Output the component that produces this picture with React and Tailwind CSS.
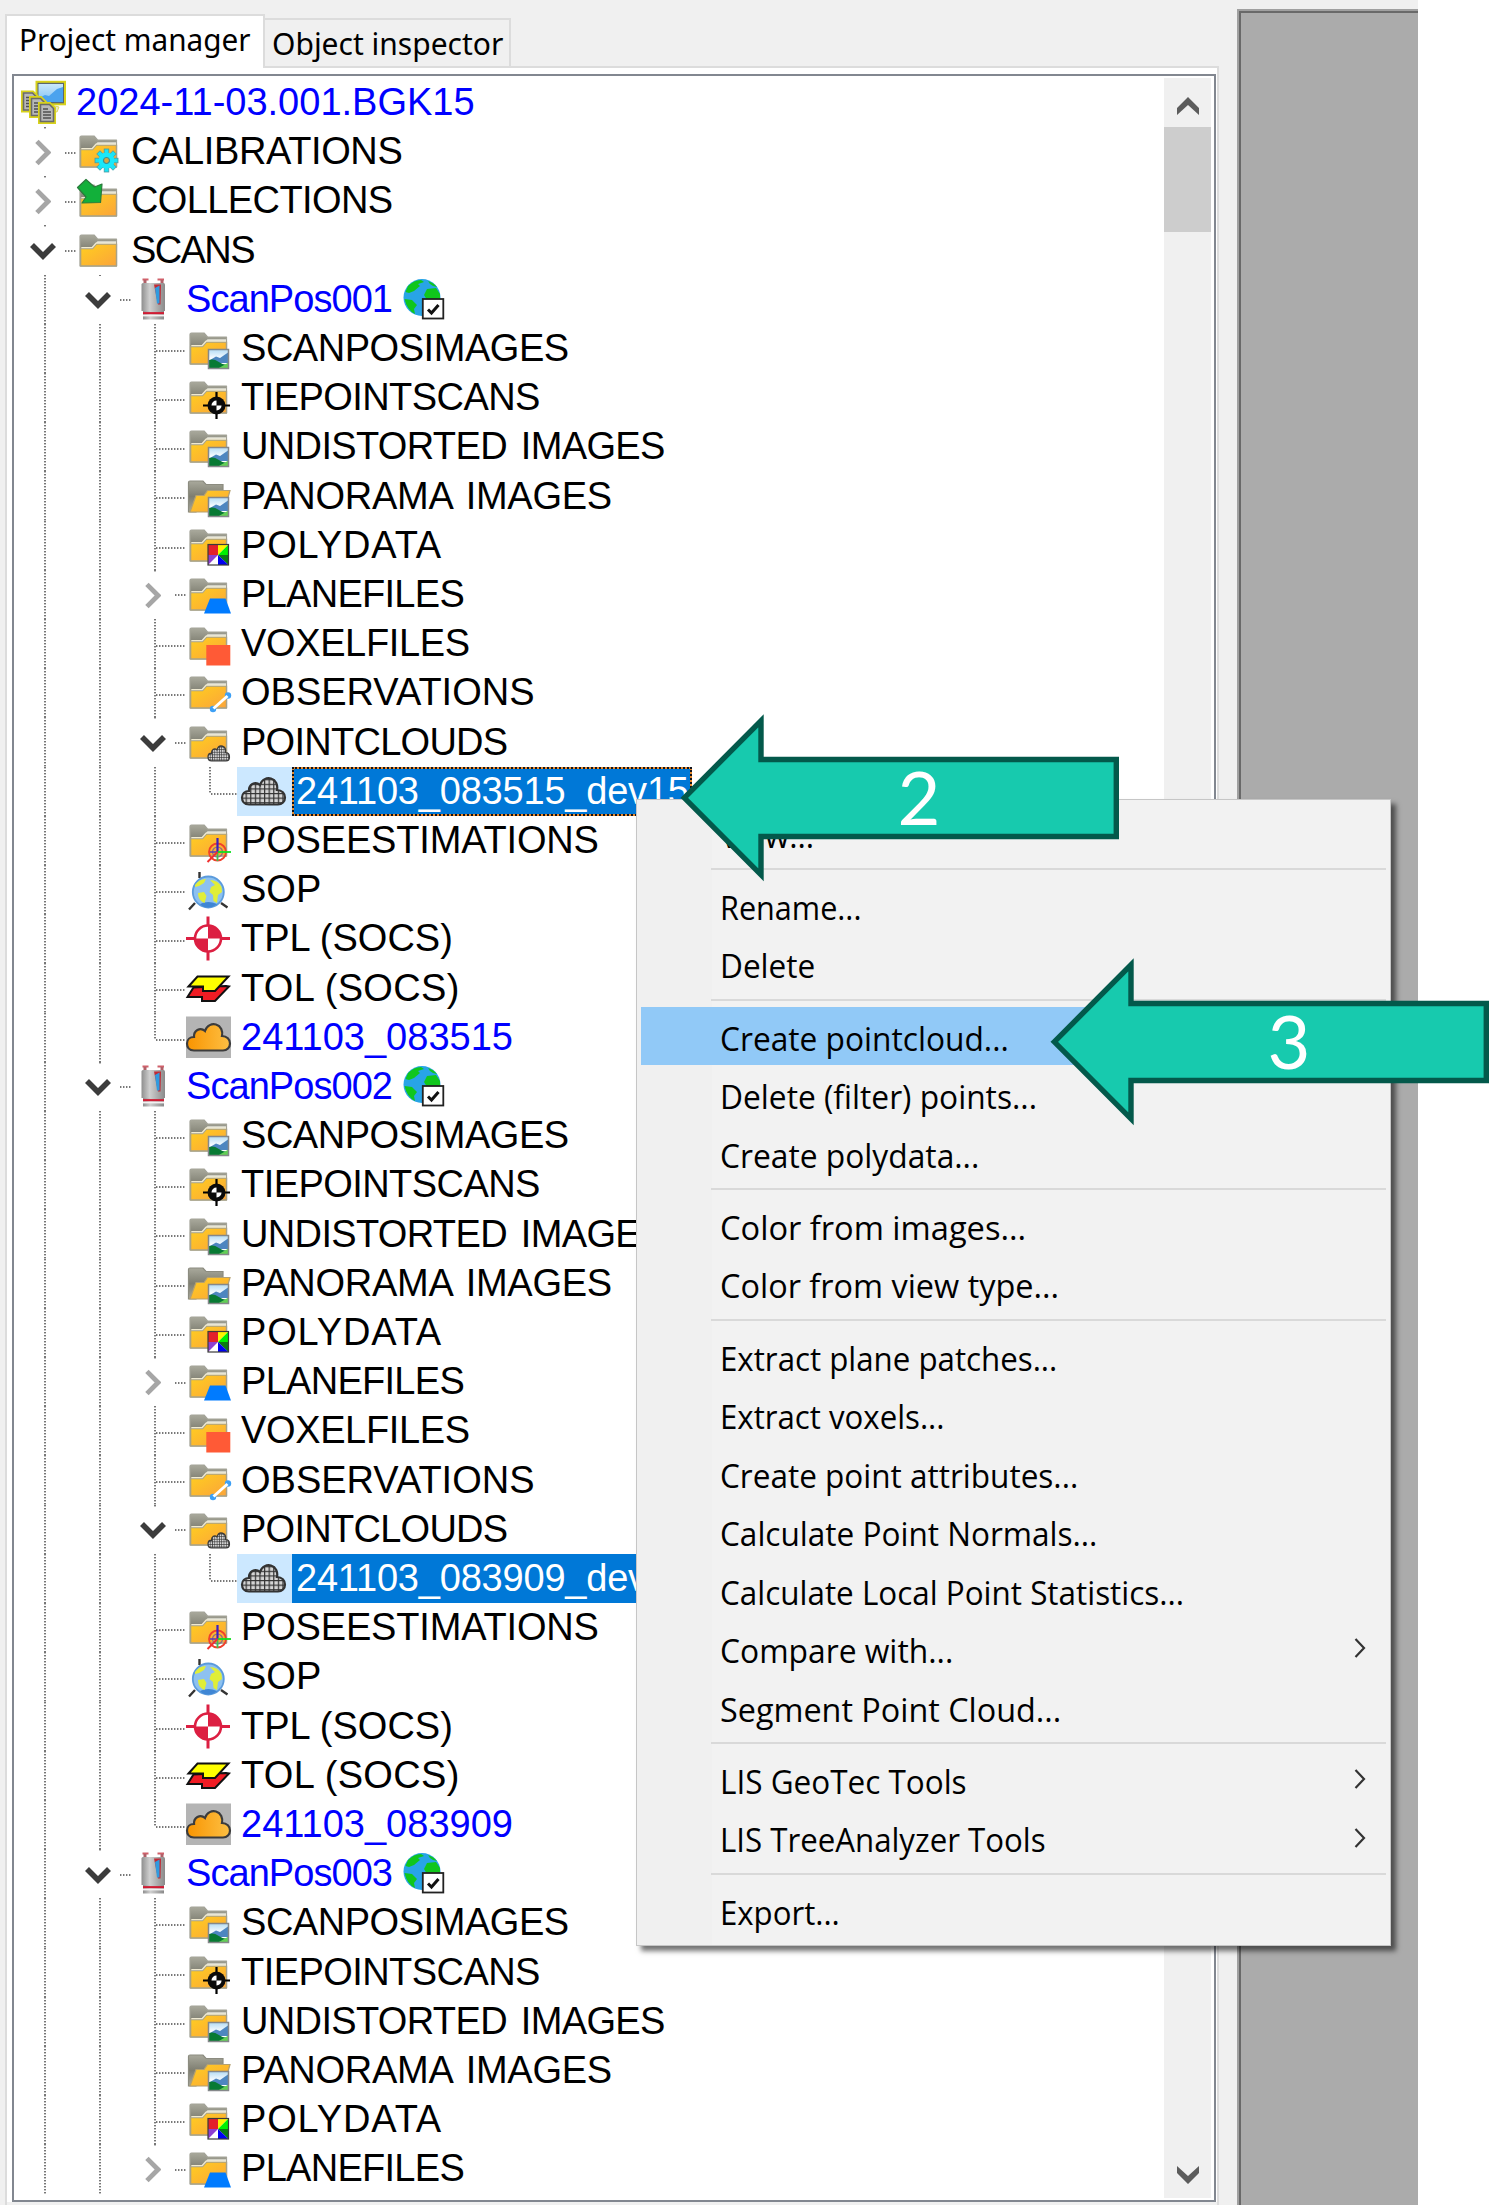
const V_DOTS =
  "bg-[repeating-linear-gradient(to_bottom,#777_0_1px,#c4c4c4_1px_2px,#fff_2px_3px)]";
const H_DOTS =
  "bg-[repeating-linear-gradient(to_right,#777_0_1px,#c4c4c4_1px_2px,#fff_2px_3px)]";

/* ---------- icons (45 x 43 cells) ---------- */

function Defs() {
  return (
    <svg width="0" height="0" className="absolute">
      <defs>
        <linearGradient id="gold" x1="0" y1="0" x2="1" y2="1">
          <stop offset="0" stopColor="#ffcf1f" />
          <stop offset="1" stopColor="#fba43a" />
        </linearGradient>
        <linearGradient id="back" x1="0" y1="0" x2="0" y2="1">
          <stop offset="0" stopColor="#a9a99c" />
          <stop offset="0.5" stopColor="#7d7d70" />
          <stop offset="1" stopColor="#a9a99c" />
        </linearGradient>
        <linearGradient id="sky" x1="0" y1="0" x2="0" y2="1">
          <stop offset="0" stopColor="#b4dcf5" />
          <stop offset="0.5" stopColor="#ffffff" />
        </linearGradient>
        <linearGradient id="orange" x1="0" y1="0" x2="1" y2="0">
          <stop offset="0" stopColor="#f99400" />
          <stop offset="1" stopColor="#fdc044" />
        </linearGradient>
        <linearGradient id="metal" x1="0" y1="0" x2="1" y2="0">
          <stop offset="0" stopColor="#8f8f8f" />
          <stop offset="0.35" stopColor="#cfcfcf" />
          <stop offset="1" stopColor="#8a8a8a" />
        </linearGradient>
        <linearGradient id="screen" x1="0" y1="0" x2="0" y2="1">
          <stop offset="0" stopColor="#c9e8fb" />
          <stop offset="1" stopColor="#7fc0f2" />
        </linearGradient>
        <pattern id="mesh" width="4.6" height="4.6" patternUnits="userSpaceOnUse">
          <rect width="4.6" height="4.6" fill="#d4d4d4" />
          <path d="M0 0H4.6M0 0V4.6" stroke="#333" strokeWidth="2.4" />
        </pattern>
      </defs>
    </svg>
  );
}

function Cell({ children }) {
  return (
    <svg viewBox="0 0 45 43" className="h-[43px] w-[45px] shrink-0 overflow-visible">
      {children}
    </svg>
  );
}

function FolderShape() {
  return (
    <g strokeLinejoin="round">
      <path d="M4 37V7.5Q4 6 5.500 6H18L21.500 10H40.500V37Z" fill="url(#back)" stroke="#a3a398" strokeWidth="1.200" />
      <path d="M21.500 12.300H40V14.500H19.500Z" fill="#e3e3d8" />
      <path d="M4.600 37V19.500H16.500L20.500 15H40.500V37Z" fill="url(#gold)" stroke="#a8a288" strokeWidth="1.400" />
      <path d="M5.300 18.700H16L20 14.200H40" fill="none" stroke="#efe9cf" strokeWidth="1.300" />
    </g>
  );
}

function Landscape() {
  return (
    <g>
      <rect x="22.500" y="22.500" width="20" height="19" fill="url(#sky)" />
      <path d="M24 33L30 29.500L34 31L42 25.500V36H24Z" fill="#4d86c0" />
      <path d="M23 33Q28 31.500 32 34.500T42.500 38V41.500H23Z" fill="#077a33" />
      <path d="M32 41.500L42.500 35.500V41.500Z" fill="#62cf55" />
      <rect x="22.500" y="22.500" width="20" height="19" fill="none" stroke="#85888a" strokeWidth="1.500" />
    </g>
  );
}

const CLOUD =
  "M8 34.500C3 34.500 1 31 1 27.500C1 23.500 4 21 8 21C7.500 15 14 10.500 19 15C21 9 26 7.500 30 8.500C35 10 37 15 36 20C41 20 44 23.500 44 27.500C44 31.500 41 34.500 37 34.500Z";

function NodeIcon({ kind }) {
  switch (kind) {
    case "project":
      return (
        <Cell>
          <rect x="15.500" y="0.800" width="28.500" height="22.500" fill="#5a6670" stroke="#d8d21c" strokeWidth="2" />
          <rect x="17.500" y="3" width="24.500" height="18" fill="url(#screen)" />
          <path d="M17.500 17L24 14L28 15L36 8L42 6V21H17.500Z" fill="#4ba3ee" />
          <path d="M30 24L38 26L36 31L30 30Z" fill="#e8e8c8" stroke="#ddd860" strokeWidth="1" />
          {[[1, 10.5], [9, 16], [18, 22]].map(([x, y]) => (
            <g key={x} transform={"translate(" + x + " " + y + ")"}>
              <path d="M0 0H11L16 5V20H0Z" fill="#c9c9c9" stroke="#d8d21c" strokeWidth="2" />
              <path d="M1.500 1.500H10.500L14.500 5.500V18.500H1.500Z" fill="#b9b9b9" stroke="#6a6a6a" strokeWidth="1.600" />
              <path d="M4 9H12M4 12H12M4 15H12M4 6H9" stroke="#505050" strokeWidth="1.500" />
            </g>
          ))}
        </Cell>
      );
    case "calibrations":
      return (
        <Cell>
          <FolderShape />
          <g transform="translate(30.500 30.500)">
            {[0, 45, 90, 135].map((a) => (
              <rect key={a} x="-2.300" y="-11.500" width="4.600" height="23" fill="#19e3f5" stroke="#4a9aa0" strokeWidth="0.800" transform={"rotate(" + a + ")"} />
            ))}
            <circle r="8" fill="#19e8fa" />
            <circle r="3" fill="#d9a640" stroke="#3a8f98" strokeWidth="1.200" />
          </g>
        </Cell>
      );
    case "collections":
      return (
        <Cell>
          <FolderShape />
          <path d="M1.500 8.500L10 0.500L18.500 8L26 5L24.500 23.500L6 24L10 18Z" fill="#12b03a" stroke="#2a7a3c" strokeWidth="1.200" strokeLinejoin="round" />
        </Cell>
      );
    case "folder":
      return <Cell><FolderShape /></Cell>;
    case "scanner":
      return (
        <Cell>
          <path d="M11.500 1.500H17.500M26.500 1.500H33" stroke="#d0606a" strokeWidth="2.200" />
          <path d="M14 2V6M31 2V6" stroke="#b06068" strokeWidth="3" />
          <path d="M10.500 6.500Q10.500 5 12 5H32.500Q34 5 34 6.500V33H10.500Z" fill="url(#metal)" />
          <path d="M23 6.500H30L29.500 26.500H27Z" fill="#c22a35" />
          <path d="M24 10L28.500 7.500V25.500H26Z" fill="#2f9be0" />
          <path d="M12 33H33V41.500H12Z" fill="url(#metal)" />
          <path d="M12 35.200H33" stroke="#d01c34" strokeWidth="2.200" />
          <path d="M12 37.500H33" stroke="#f2f2f2" strokeWidth="1.800" />
        </Cell>
      );
    case "images":
      return <Cell><FolderShape /><Landscape /></Cell>;
    case "panorama":
      return (
        <Cell>
          <path d="M2.500 37V7.500Q2.500 6 4 6H17L20 9.500H37V20L10 37Z" fill="url(#back)" stroke="#8c8c80" strokeWidth="1.200" />
          <path d="M4 37L10 20.500H18L21.500 15.500H44L38 37Z" fill="url(#gold)" stroke="#b4a070" strokeWidth="1.200" />
          <Landscape />
        </Cell>
      );
    case "tiepoints":
      return (
        <Cell>
          <FolderShape />
          <path d="M30.500 16V43M17 29.500H44" stroke="#000" strokeWidth="2.200" />
          <circle cx="30.500" cy="29.500" r="9" fill="#0a0a0a" />
          <path d="M30.500 29.500H25.500A5 5 0 0 1 30.500 24.500Z" fill="#fff" />
          <path d="M30.500 29.500H35.500A5 5 0 0 1 30.500 34.500Z" fill="#fff" />
        </Cell>
      );
    case "polydata":
      return (
        <Cell>
          <FolderShape />
          <rect x="22" y="20.500" width="20.500" height="20.500" fill="#fff" />
          <path d="M22 20.500H32V31H22Z" fill="#e3202a" />
          <path d="M32 20.500H42.500L32 31Z" fill="#fff200" />
          <path d="M42.500 20.500V31H32Z" fill="#00f000" />
          <path d="M42.500 31V41L32 31Z" fill="#0b7a12" />
          <path d="M32 31L42.500 41H32Z" fill="#0000f0" />
          <path d="M22 31H32L22 41Z" fill="#8d3fd0" />
          <rect x="22" y="20.500" width="20.500" height="20.500" fill="none" stroke="#3a3a3a" strokeWidth="1.200" />
        </Cell>
      );
    case "planes":
      return <Cell><FolderShape /><path d="M24 25.500H39.500L45 40.500H18Z" fill="#007bff" /></Cell>;
    case "voxels":
      return <Cell><FolderShape /><rect x="20.300" y="23" width="24" height="20.500" fill="#ff5a36" /></Cell>;
    case "observations":
      return (
        <Cell>
          <FolderShape />
          <circle cx="27" cy="38" r="3.200" fill="#3da0f5" />
          <circle cx="42" cy="24.500" r="3.200" fill="#3da0f5" />
          <path d="M27.500 37.500L41.500 25" stroke="#fff" strokeWidth="3" />
        </Cell>
      );
    case "pointclouds":
      return (
        <Cell>
          <FolderShape />
          <g transform="translate(21.500 20.500) scale(0.500 0.560)">
            <path d={CLOUD} fill="url(#mesh)" stroke="#3a3a3a" strokeWidth="2.400" />
          </g>
        </Cell>
      );
    case "pose":
      return (
        <Cell>
          <FolderShape />
          <circle cx="31.500" cy="33" r="8.500" fill="none" stroke="#f0402c" strokeWidth="1.800" />
          <circle cx="31.500" cy="33" r="5" fill="none" stroke="#8a6a8a" strokeWidth="1.200" />
          <path d="M31.500 19V33" stroke="#3a20c0" strokeWidth="2.200" />
          <path d="M31.500 33V42" stroke="#40c050" strokeWidth="1.800" />
          <path d="M24 33H32" stroke="#5a40b0" strokeWidth="1.600" />
          <path d="M32 33H45" stroke="#10e020" strokeWidth="1.800" />
          <path d="M31.500 33L21.500 43" stroke="#f03030" strokeWidth="2" />
        </Cell>
      );
    case "sop":
      return (
        <Cell>
          <path d="M13.500 10V4M9 35L3 41.500M35 35L41.500 39.500" stroke="#333" strokeWidth="2.400" />
          <circle cx="22.300" cy="24" r="15.500" fill="#8dc1f0" stroke="#5b9bdc" strokeWidth="1.800" />
          <path d="M14 36Q22 32 31 36Q27 39.500 22 39.500T14 36Z" fill="#3f86d4" />
          <path d="M9 17Q13 11 20 11L18 15L13 18L9 19Z" fill="#e0ee38" />
          <path d="M12 25L18 24L20.500 28L18.500 35Q14 33 12.500 29Z" fill="#e0ee38" />
          <path d="M24 12Q32 12 35.500 19L36 24L32 27L31 35L27.500 33L27 27L23.500 24L25 19L29 17Z" fill="#e0ee38" />
        </Cell>
      );
    case "tpl":
      return (
        <Cell>
          <path d="M22 -0.500V43.500M0 21.500H44" stroke="#dc1f42" strokeWidth="3" />
          <circle cx="22" cy="21.500" r="13" fill="#fff" stroke="#dc1f42" strokeWidth="2.600" />
          <path d="M22 21.500V8.500A13 13 0 0 1 35 21.500Z" fill="#dc1f42" />
          <path d="M22 21.500V34.500A13 13 0 0 1 9 21.500Z" fill="#dc1f42" />
        </Cell>
      );
    case "tol":
      return (
        <Cell>
          <path d="M1.500 30L7.500 20.500L40 19L43 19.500L29 34H16V30Z" fill="#f01c24" stroke="#111" strokeWidth="2" />
          <path d="M2.500 19.500L11.500 9.500H42.500L29 24H17V19.500Z" fill="#ffff00" stroke="#111" strokeWidth="2" />
        </Cell>
      );
    case "scan":
      return (
        <Cell>
          <rect x="0" y="0.500" width="45" height="41.500" fill="#b4b4b4" />
          <path d={CLOUD} fill="url(#orange)" stroke="#3c3c3c" strokeWidth="2.200" />
        </Cell>
      );
    case "cloud":
      return <Cell><path d={CLOUD} fill="url(#mesh)" stroke="#333" strokeWidth="2.200" /></Cell>;
    default:
      return null;
  }
}

function GlobeCheck() {
  return (
    <svg viewBox="0 0 42 42" className="h-[42px] w-[42px] shrink-0 overflow-visible">
      <circle cx="19" cy="19.500" r="18.500" fill="#28a4e6" />
      <path d="M5 8Q11 2 18 2L21 4L15 6L17 8L11 13L6 15L2.500 14Z" fill="#10c61c" />
      <path d="M1.500 21L9 22L14 27L11 31L12 36Q4 32 1.500 21Z" fill="#10c61c" />
      <path d="M25 3Q31 5 34 9L30 8L27 6Z" fill="#10c61c" />
      <path d="M24 11L33 10L37 16V22H24L21 17Z" fill="#10c61c" />
      <rect x="19.800" y="21" width="20.500" height="19.500" fill="#fff" stroke="#222" strokeWidth="1.800" />
      <path d="M25 31.500L28.500 35L35.500 27" fill="none" stroke="#111" strokeWidth="3" />
    </svg>
  );
}

/* ---------- tree ---------- */

const children = (name) => [
  { kind: "images", label: "SCANPOSIMAGES", tracking: "tracking-[-0.46px]" },
  { kind: "tiepoints", label: "TIEPOINTSCANS", tracking: "tracking-[-0.56px]" },
  { kind: "images", label: "UNDISTORTED IMAGES", tracking: "tracking-[-0.65px] [word-spacing:4px]" },
  { kind: "panorama", label: "PANORAMA IMAGES", tracking: "tracking-[-0.27px] [word-spacing:4px]" },
  { kind: "polydata", label: "POLYDATA", tracking: "tracking-[0.85px]" },
  { kind: "planes", label: "PLANEFILES", state: "closed", tracking: "tracking-[-0.72px]" },
  { kind: "voxels", label: "VOXELFILES", tracking: "tracking-[-0.37px]" },
  { kind: "observations", label: "OBSERVATIONS" },
  { kind: "pointclouds", label: "POINTCLOUDS", state: "open", tracking: "tracking-[-0.73px]" },
  { kind: "cloud", label: name + "_dev15", level: 4, last: true, selected: true, focused: name === "241103_083515" },
  { kind: "pose", label: "POSEESTIMATIONS", tracking: "tracking-[-0.17px]" },
  { kind: "sop", label: "SOP" },
  { kind: "tpl", label: "TPL (SOCS)" },
  { kind: "tol", label: "TOL (SOCS)", tracking: "tracking-[0.33px]" },
  { kind: "scan", label: name, blue: true, last: true },
].map((n) => ({ level: 3, ...n }));

const scanPos = (label) => ({
  level: 2, kind: "scanner", label, state: "open", blue: true, globe: true, tracking: "tracking-[-0.95px]",
});

const ROWS = [
  { level: 0, kind: "project", label: "2024-11-03.001.BGK15", blue: true },
  { level: 1, kind: "calibrations", label: "CALIBRATIONS", state: "closed", tracking: "tracking-[-0.38px]" },
  { level: 1, kind: "collections", label: "COLLECTIONS", state: "closed", tracking: "tracking-[-0.6px]" },
  { level: 1, kind: "folder", label: "SCANS", state: "open", tracking: "tracking-[-1.6px]" },
  scanPos("ScanPos001"),
  ...children("241103_083515"),
  scanPos("ScanPos002"),
  ...children("241103_083909"),
  scanPos("ScanPos003"),
  ...children("").slice(0, 6),
];

function Branch({ node }) {
  if (node.state) {
    return (
      <div className="flex h-full w-[59px] shrink-0 flex-col">
        <div className={"ml-[27px] h-[2px] w-[2px] " + V_DOTS} />
        <div className="flex h-[51px] items-center">
          {node.state === "open" ? (
            <svg viewBox="0 0 26 18" className="ml-[13px] h-[18px] w-[26px]">
              <path d="M2 3L13 14L24 3" fill="none" stroke="#3c3c3c" strokeWidth="5.600" />
            </svg>
          ) : (
            <svg viewBox="0 0 17 27" className="mr-[5px] ml-[18px] h-[27px] w-[17px]">
              <path d="M2 2L13.500 13.500L2 25" fill="none" stroke="#a6a6a6" strokeWidth="5" />
            </svg>
          )}
          <div className={"ml-[9px] h-[2px] w-[11px] " + H_DOTS} />
        </div>
      </div>
    );
  }
  return (
    <div className="flex h-full w-[59px] shrink-0 items-start pl-[27px]">
      <div className={(node.last ? "h-[27.500px] " : "h-full ") + "w-[2px] " + V_DOTS} />
      <div className={"mt-[26px] h-[2px] grow " + H_DOTS} />
    </div>
  );
}

function Row({ node }) {
  const guides = Array.from({ length: Math.max(0, node.level - 1) });
  return (
    <div className="flex h-[49.210px] shrink-0 items-center whitespace-nowrap">
      {guides.map((_, i) => (
        <div key={i} className="h-full w-[55px] shrink-0 pl-[27px]">
          <div className={"h-full w-[2px] " + V_DOTS} />
        </div>
      ))}
      {node.level === 0 ? <div className="w-1" /> : <Branch node={node} />}
      {node.selected ? (
        <>
          <div className="-ml-1 flex h-full w-[55px] items-center bg-[#cce8ff] pl-1">
            <NodeIcon kind={node.kind} />
          </div>
          <div
            className={
              "flex h-full items-center bg-[#0078d7] pr-[3px] pb-[1px] pl-[4px] tracking-[-0.2px] text-white " +
              (node.focused
                ? "shadow-[inset_0_0_0_2px_#e88a2c] outline-[2px] -outline-offset-2 outline-dotted outline-[#10131c]"
                : "")
            }
          >
            {node.label}
          </div>
        </>
      ) : (
        <>
          <NodeIcon kind={node.kind} />
          <span className={"ml-[10px] pb-[1px] " + (node.blue ? "text-[#0000ff] " : "text-black ") + (node.tracking || "")}>
            {node.label}
          </span>
        </>
      )}
      {node.globe && (
        <div className="ml-[11px] pb-[1px]">
          <GlobeCheck />
        </div>
      )}
    </div>
  );
}

function ScrollArrow({ down }) {
  return (
    <svg viewBox="0 0 22 18" className="h-[18px] w-[22px]">
      <path d={down ? "M0 0V7L11 18L22 7V0L11 10Z" : "M0 18V11L11 0L22 11V18L11 8Z"} fill="#5c5c5c" />
    </svg>
  );
}

/* ---------- context menu ---------- */

const MENU = [
  [["View...", "scale-x-[0.96]"]],
  [
    ["Rename...", "scale-x-[0.927]"],
    ["Delete", "scale-x-[0.956]"],
  ],
  [
    ["Create pointcloud...", "scale-x-[0.96]"],
    ["Delete (filter) points...", "scale-x-[0.961]"],
    ["Create polydata...", "scale-x-[0.962]"],
  ],
  [
    ["Color from images...", "scale-x-[0.988]"],
    ["Color from view type...", "scale-x-[0.983]"],
  ],
  [
    ["Extract plane patches...", "scale-x-[0.947]"],
    ["Extract voxels...", "scale-x-[0.945]"],
    ["Create point attributes...", "scale-x-[0.955]"],
    ["Calculate Point Normals...", "scale-x-[0.956]"],
    ["Calculate Local Point Statistics...", "scale-x-[0.952]"],
    ["Compare with...", "scale-x-[0.963]", true],
    ["Segment Point Cloud...", "scale-x-[0.98]"],
  ],
  [
    ["LIS GeoTec Tools", "scale-x-[0.954]", true],
    ["LIS TreeAnalyzer Tools", "scale-x-[0.946]", true],
  ],
  [["Export...", "scale-x-[0.944]"]],
];

function ContextMenu() {
  return (
    <div className="absolute top-[799px] left-[636px] h-[1147px] w-[755px] border-[1.500px] border-[#c6c6c6] bg-[linear-gradient(to_right,#f0f0f0_0_75px,#f2f2f2_75px)] px-[4px] py-[3.500px] font-['Open_Sans',sans-serif] text-[33px] text-black shadow-[5px_5px_5px_rgba(0,0,0,0.55)]">
      {MENU.map((group, g) => (
        <div key={g}>
          {g > 0 && (
            <div className="flex h-[13.800px] items-center pl-[70px]">
              <div className="h-[2px] w-full bg-[#d9d9d9]" />
            </div>
          )}
          {group.map(([label, stretch, submenu]) => (
            <div
              key={label}
              className={
                "flex h-[58.500px] items-center justify-between pr-[20px] pl-[79px] whitespace-nowrap " +
                (label === "Create pointcloud..." ? "bg-[#91c9f7]" : "")
              }
            >
              <span className={"origin-left pt-[5px] " + stretch}>{label}</span>
              {submenu && (
                <svg viewBox="0 0 12 20" className="h-[20px] w-[12px]">
                  <path d="M1.500 1L10 10L1.500 19" fill="none" stroke="#333" strokeWidth="2.200" />
                </svg>
              )}
            </div>
          ))}
        </div>
      ))}
    </div>
  );
}

function Callout({ label, className }) {
  return (
    <svg viewBox="0 0 440 170" className={"absolute h-[170px] w-[440px] " + className}>
      <path
        d="M5.300 84.800L82 7.900V46.500H437.300V123.500H82V161.800Z"
        fill="#17caae"
        stroke="#03594b"
        strokeWidth="5.400"
        strokeMiterlimit="8"
      />
      <text x="240" y="112" textAnchor="middle" fill="#fff" className="font-['Lato',sans-serif] text-[74px]">
        {label}
      </text>
    </svg>
  );
}

export default function App() {
  return (
    <div className="relative flex h-[2205px] w-[1489px] overflow-hidden bg-white">
      <Defs />
      <div className="flex w-[1418px] bg-[#f0f0f0]">
        <div className="flex w-[1237px] flex-col pl-[5px]">
          <div className="flex h-[68px] items-end font-['Noto_Sans',sans-serif] text-[30px] leading-[40px] text-black">
            <div className="z-10 h-[54px] w-[260px] border-2 border-b-0 border-[#dcdcdc] bg-white pt-[4px] pl-[12px] whitespace-nowrap">
              <div className="origin-left scale-x-[0.99]">Project manager</div>
            </div>
            <div className="h-[50px] w-[246px] border-t-2 border-r-2 border-b-2 border-[#dcdcdc] bg-[#f0f0f0] pt-[4px] pl-[7px] whitespace-nowrap">
              <div>Object inspector</div>
            </div>
            <div className="h-[2px] w-[708px] bg-[#dcdcdc]" />
          </div>
          <div className="h-[2137px] w-[1214px] border-r-2 border-l-2 border-[#dcdcdc] bg-[#f0f0f0]">
            <div className="flex h-[2134px] bg-white pt-[6px] pl-[5px]">
              <div className="flex h-[2128px] w-[1204px] overflow-hidden border-2 border-[#828790] bg-white">
                <div className="flex grow flex-col overflow-hidden pt-[1.800px] pl-[3px] font-['Liberation_Sans',Arial,sans-serif] text-[38px] leading-[44px]">
                  {ROWS.map((node, i) => (
                    <Row key={i} node={node} />
                  ))}
                </div>
                <div className="my-[2px] mr-[3px] flex w-[47px] shrink-0 flex-col items-center justify-between bg-[#f0f0f0]">
                  <div className="flex w-full flex-col items-center">
                    <div className="flex h-[49px] items-center pt-[6px]">
                      <ScrollArrow />
                    </div>
                    <div className="h-[105px] w-full bg-[#cdcdcd]" />
                  </div>
                  <div className="pb-[14px]">
                    <ScrollArrow down />
                  </div>
                </div>
              </div>
            </div>
          </div>
        </div>
        <div className="mt-[9px] grow border-t-2 border-l-2 border-[#a0a0a0]">
          <div className="h-full border-t-2 border-l-2 border-[#696969] bg-[#ababab]" />
        </div>
      </div>
      <ContextMenu />
      <Callout label="2" className="top-[713px] left-[679px]" />
      <Callout label="3" className="top-[956.500px] left-[1049px]" />
    </div>
  );
}
